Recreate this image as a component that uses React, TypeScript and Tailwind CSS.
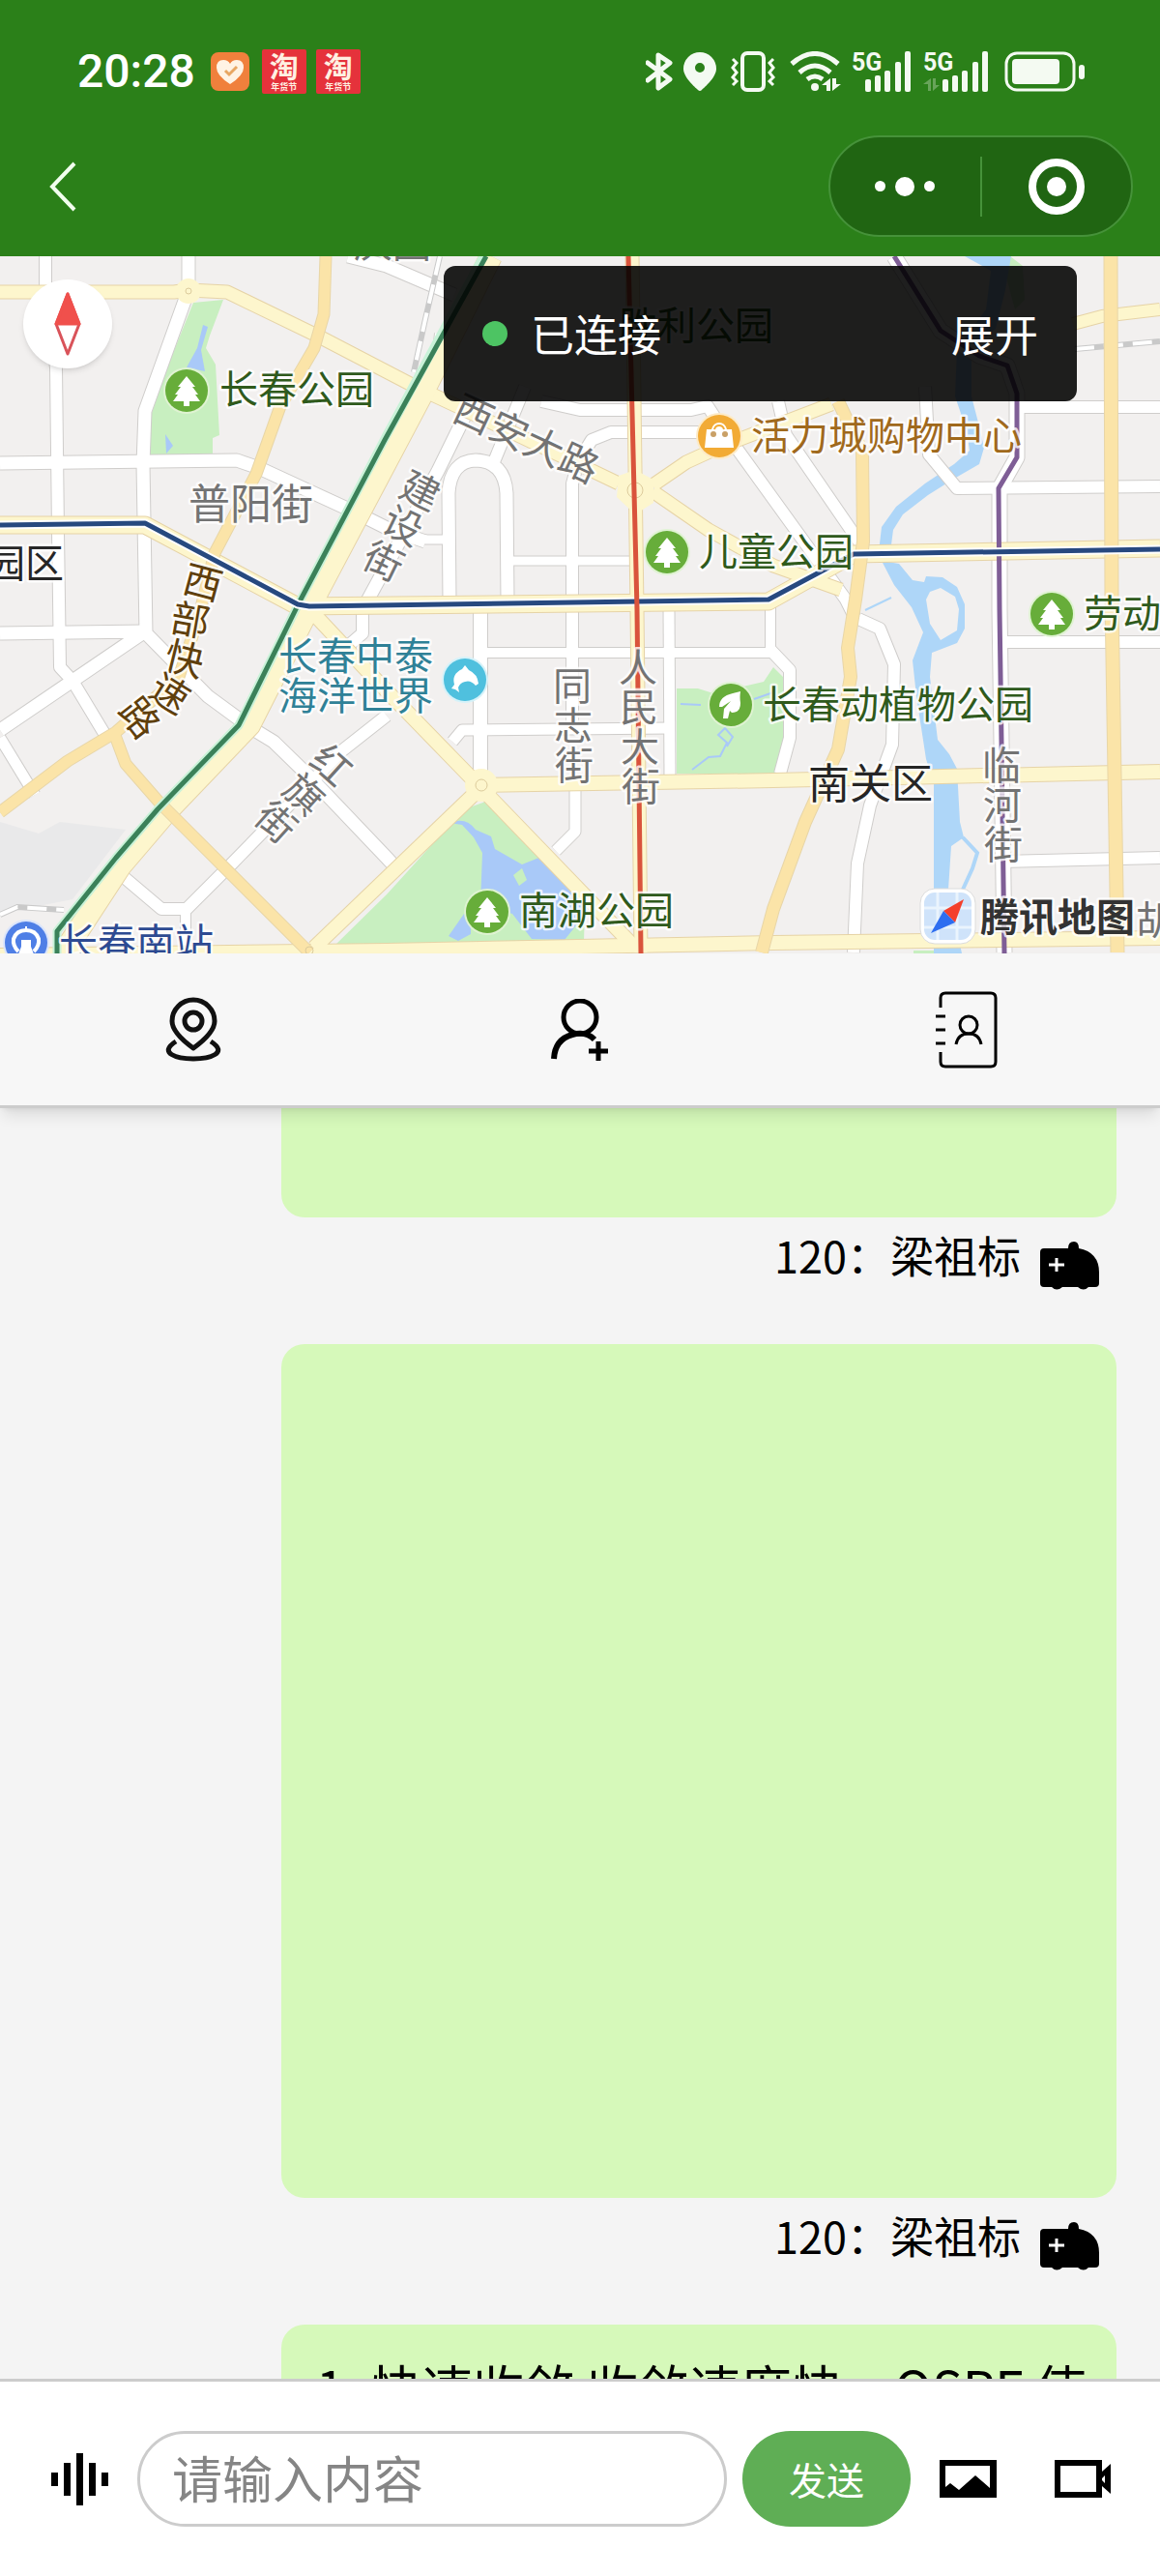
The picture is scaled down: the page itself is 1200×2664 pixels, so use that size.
type Road = { d: string; w: number };

const whiteRoads: Road[] = [
  { d: "M47 265V300L58 380L60 550L62 690L75 704L110 762", w: 12 },
  { d: "M195 265V300L150 425L148 480L151 655L215 720L260 753L283 767L320 803L400 887L412 900", w: 13 },
  { d: "M0 479L245 476L268 484L368 530L402 547L440 560", w: 13 },
  { d: "M0 655L150 653L75 704L0 755", w: 13 },
  { d: "M0 763L36 822", w: 11 },
  { d: "M400 740L353 777L240 893L193 940H167L128 907", w: 12 },
  { d: "M192 940V980", w: 10 },
  { d: "M360 265L400 275L470 305", w: 13 },
  { d: "M456 345L452 380L440 410", w: 12 },
  { d: "M480 432L453 487L378 625", w: 13 },
  { d: "M375 628V655L360 668", w: 12 },
  { d: "M465 622L464 510Q466 477 492 476Q522 477 524 510L525 622", w: 13 },
  { d: "M430 558H462", w: 9 },
  { d: "M543 400L510 480", w: 12 },
  { d: "M592 622V500L598 478L612 455L632 447H730", w: 12 },
  { d: "M525 580H655", w: 9 },
  { d: "M560 415L600 424H715L732 420L745 440L875 620L885 640", w: 12 },
  { d: "M805 415L813 450L890 562", w: 12 },
  { d: "M497 628V800", w: 14 },
  { d: "M592 628V755", w: 12 },
  { d: "M692 628L693 805", w: 11 },
  { d: "M500 675H797V628", w: 10 },
  { d: "M468 767L478 755L693 753", w: 11 },
  { d: "M595 812V860L575 880", w: 11 },
  { d: "M797 672L817 693V763L807 800", w: 12 },
  { d: "M888 640L910 650L925 687L923 770L900 833L887 893L883 985", w: 12 },
  { d: "M957 400L961 470L990 505L1200 503", w: 12 },
  { d: "M1052 421H1200", w: 12 },
  { d: "M1036 664H1200", w: 12 },
  { d: "M1036 891L1200 887", w: 12 },
  { d: "M925 265L973 342L1013 368L1042 378L1052 407V473L1034 505L1034 630L1036 767L1039 985", w: 15 },
];

const yellowRoads: Road[] = [
  { d: "M0 302H180L195 300L235 302L330 348L430 400L475 421L640 500", w: 13 },
  { d: "M675 502L710 478L745 462L860 418", w: 13 },
  { d: "M675 508L733 548L800 585L870 610", w: 13 },
  { d: "M0 543H150L308 627L795 622L883 573L1200 567", w: 17 },
  { d: "M508 265L438 405L320 628L258 750L172 840L125 895L66 985", w: 22 },
  { d: "M322 632L383 697L490 807L655 978", w: 14 },
  { d: "M500 812L325 980", w: 14 },
  { d: "M500 812L800 807L1200 798", w: 14 },
  { d: "M0 988L400 983L800 975L1200 970", w: 14 },
  { d: "M654 265L659 630L663 985", w: 13 },
  { d: "M1110 335L1140 327L1200 320", w: 12 },
];

const orangeRoads: Road[] = [
  { d: "M337 265L335 325L325 360L290 420L265 490L222 572L205 640L185 700L120 757L70 787L0 840", w: 11 },
  { d: "M118 758L130 790L165 830L320 985", w: 11 },
  { d: "M867 415L892 467L893 560L885 620L877 670L880 700L867 775L833 850L800 940L788 985", w: 12 },
  { d: "M1149 265L1150 620L1153 800L1156 985", w: 13 },
];

const railways = "M455 265L440 330L428 385M1112 361L1200 353M0 946L18 938L66 941";

const green = "#2f5a1c";
const gray = "#737373";

type Label = { text: string; x: number; y: number; fill: string; size?: number; bold?: boolean; angle?: number };

const labels: Label[] = [
  { text: "庆园", x: 366, y: 266, fill: gray },
  { text: "胜利公园", x: 640, y: 351, fill: green },
  { text: "长春公园", x: 227, y: 417, fill: green },
  { text: "普阳街", x: 195, y: 537, fill: gray, size: 43 },
  { text: "园区", x: -14, y: 597, fill: "#262626", size: 40 },
  { text: "西安大路", x: 466, y: 433, fill: gray, angle: 25 },
  { text: "活力城购物中心", x: 777, y: 465, fill: "#a0691c" },
  { text: "儿童公园", x: 723, y: 585, fill: green },
  { text: "劳动", x: 1121, y: 649, fill: green },
  { text: "长春中泰", x: 288, y: 693, fill: "#2f8197" },
  { text: "海洋世界", x: 288, y: 734, fill: "#2f8197" },
  { text: "长春动植物公园", x: 789, y: 743, fill: green },
  { text: "南关区", x: 836, y: 826, fill: "#262626", size: 43 },
  { text: "南湖公园", x: 537, y: 956, fill: green },
  { text: "长春南站", x: 61, y: 989, fill: "#2d4a92" },
  { text: "胡", x: 1175, y: 966, fill: gray },
  { text: "腾讯地图", x: 1014, y: 963, fill: "#333333", bold: true },
];

// street names that follow the road, one glyph per point
const streetNames = [
  { fill: "#5f3f0c", glyphs: [["西", 210, 602, 15], ["部", 197, 641, 10], ["快", 191, 681, 14], ["速", 176, 717, 32], ["路", 145, 742, 52]] },
  { fill: gray, glyphs: [["建", 435, 507, 26], ["设", 417, 543, 26], ["街", 397, 580, 26]] },
  { fill: gray, glyphs: [["红", 343, 791, 42], ["旗", 315, 821, 42], ["街", 286, 850, 42]] },
  { fill: gray, glyphs: [["同", 592, 709, 0], ["志", 593, 750, 0], ["街", 594, 791, 0]] },
  { fill: gray, glyphs: [["人", 660, 690, 0], ["民", 661, 731, 0], ["大", 662, 772, 0], ["街", 663, 813, 0]] },
  { fill: gray, glyphs: [["临", 1036, 791, 0], ["河", 1037, 832, 0], ["街", 1038, 873, 0]] },
] as { fill: string; glyphs: [string, number, number, number][] }[];

const parks = [
  [193, 404],
  [690, 571],
  [1088, 635],
  [504, 943],
];

const Roads = ({ roads, fill, edge }: { roads: Road[]; fill: string; edge: string }) => {
  return (
    <g fill="none" strokeLinejoin="round">
      {roads.map((r) => (
        <path key={r.d} d={r.d} stroke={edge} strokeWidth={r.w + 2} />
      ))}
      {roads.map((r) => (
        <path key={r.d} d={r.d} stroke={fill} strokeWidth={r.w} />
      ))}
    </g>
  );
};

const CityMap = () => {
  return (
    <svg viewBox="0 265 1200 721" className="block h-auto w-full bg-[#f2f0ef]" role="img" aria-label="地图">
      <path d="M0 850L40 862L62 850L130 858L75 930L0 945Z" fill="#e9e9ea" />
      <g fill="#c8efc0">
        <path d="M200 313L231 310L217 347L213 360L223 377L227 450L220 453V470H155V433L173 380Z" />
        <path d="M700 712H722L738 717L790 705L800 690L815 705V760L805 800H700Z" />
        <path d="M480 837L505 828L515 830L560 880L605 935L604 975L345 979L400 925Z" />
        <path d="M1045 265L1058 275L1060 310L1050 320L1035 265Z" />
        <path d="M945 983H970V986H945Z" />
      </g>
      <g fill="#a9c9f8">
        <path d="M210 336L215 338L208 362L212 384L193 380L204 360Z" />
        <path d="M171 449L179 461L172 469Z" />
        <path d="M465 851Q482 844 492 858L508 865L512 878L540 894L560 886L600 930L608 942L584 972L550 971L530 945L497 935L499 882L490 866L478 853Z" />
        <path d="M480 945L464 968L474 973L487 966V945Z" />
      </g>
      <path d="M531 905L540 898L545 910L537 916Z" fill="#c8efc0" />
      <path
        d="M704 728L725 729M780 723L800 716M716 796L733 783L745 782L752 768L743 760L750 753L758 762L752 772"
        fill="none"
        stroke="#a9c9f8"
        strokeWidth="2"
      />
      <g fill="#aed6f8">
        <path d="M998 265H1046L1040 300L1030 340L1005 360L1005 410L1012 437L1018 463L1013 480L987 495L960 512L934 532L924 548L921 571H909L912 545L927 524L957 500L987 480L1003 466L1000 445L988 410L990 360L1020 320L1025 280Z" />
        <path
          fillRule="evenodd"
          d="M912 580L930 583L944 600L956 602L958 596L975 597L990 607L998 625V650L990 665L964 675L962 700L970 765L982 780L990 795L993 850L997 866L984 875L981 920L995 986H966V810L958 785L948 720L944 683L955 654L943 628L925 605ZM958 620L962 612L973 608L988 617L992 630L990 652L973 662L962 645Z"
        />
      </g>
      <path d="M996 866L1011 882L1006 898L995 922" fill="none" stroke="#aed6f8" strokeWidth="4" />
      <path d="M895 631L922 618" stroke="#aed6f8" strokeWidth="2" />

      <Roads roads={whiteRoads} fill="#ffffff" edge="#cfcdcb" />
      <path d={railways} fill="none" stroke="#c9c9c9" strokeWidth="6" />
      <path d={railways} fill="none" stroke="#ffffff" strokeWidth="4" strokeDasharray="20 10" />
      <Roads roads={yellowRoads} fill="#fdf6cd" edge="#e6d3a6" />
      <Roads roads={orangeRoads} fill="#fbe4a8" edge="#e8d6a8" />
      <g fill="#fdf6cd">
        <circle cx="195" cy="301" r="13" />
        <circle cx="498" cy="812" r="17" />
        <path d="M640 492L657 486L676 496V520L657 532L638 514Z" />
      </g>
      <g fill="none" stroke="#dccb9c" strokeWidth="1">
        <circle cx="195" cy="301" r="3" />
        <circle cx="498" cy="812" r="6" />
        <circle cx="657" cy="507" r="8" />
        <circle cx="320" cy="983" r="4" />
      </g>

      <g fill="none" strokeWidth="5" strokeLinejoin="round">
        <path d="M500 265L400 450L310 622L247 750L163 837L120 887L59 963L59 986" stroke="#c9f2d8" strokeWidth="9" />
        <path d="M503 265L398 455L310 622L247 750L163 837L120 887L59 963L59 986" stroke="#3b8159" />
        <path d="M925 265L973 342L1013 368L1042 378L1052 407V473L1033 505L1034 630L1036 767L1039 986" stroke="#7f5e96" />
        <path d="M0 543L150 541L308 625L320 627L795 620L883 573L1200 568" stroke="#ffffff" strokeWidth="9" />
        <path d="M0 543L150 541L308 625L320 627L795 620L883 573L1200 568" stroke="#27497f" />
        <path d="M650 265L659 630L663 986" stroke="#d9533c" />
      </g>

      <g fontFamily='"Noto Sans CJK SC", sans-serif' stroke="#ffffff" strokeOpacity="0.8" strokeWidth="5" strokeLinejoin="round" paintOrder="stroke">
        {labels.map((l) => (
          <text
            key={l.text}
            x={l.x}
            y={l.y}
            fill={l.fill}
            fontSize={l.size ?? 40}
            fontWeight={l.bold ? 700 : 400}
            transform={l.angle ? `rotate(${l.angle} ${l.x} ${l.y})` : undefined}
          >
            {l.text}
          </text>
        ))}
        {streetNames.map((s) =>
          s.glyphs.map(([ch, x, y, angle]) => (
            <text key={`${ch}${x}`} x={x} y={y + 15} fill={s.fill} fontSize="40" textAnchor="middle" transform={`rotate(${angle} ${x} ${y})`}>
              {ch}
            </text>
          )),
        )}
      </g>

      {parks.map(([x, y]) => (
        <g key={x} transform={`translate(${x} ${y})`}>
          <circle r="24" fill="#dff3d2" />
          <circle r="22" fill="#67ad3a" />
          <path d="M0 -15L9 -4H6L12 4H9L14 11H3V16H-3V11H-14L-9 4H-12L-6 -4H-9Z" fill="#fff" />
        </g>
      ))}
      <g transform="translate(756 729)">
        <circle r="24" fill="#dff3d2" />
        <circle r="22" fill="#67ad3a" />
        <path d="M-12 2Q-12 -9 2 -12L10 -14Q9 -8 10 -2Q10 8 1 8L-1 6L-3 14H-8L-7 4L0 -4L-9 2Z" fill="#fff" />
      </g>
      <g transform="translate(744 451)">
        <circle r="24" fill="#fdebc8" />
        <circle r="22" fill="#f2ab35" />
        <path d="M-13 -7H-8Q-6 -14 0 -14Q6 -14 8 -7H13L15 12H-15Z" fill="#fff" />
        <path d="M-5 -7Q-4 -11 0 -11Q4 -11 5 -7" fill="none" stroke="#f2ab35" strokeWidth="2" />
        <circle cx="-6" cy="-2" r="3" fill="#c9a066" />
        <circle cx="6" cy="-2" r="3" fill="#c9a066" />
      </g>
      <g transform="translate(481 703)">
        <circle r="24" fill="#d6f2f9" />
        <circle r="22" fill="#4fc0de" />
        <path d="M-3 -11L0 -15L4 -10Q13 -6 14 4L11 6Q6 0 0 2Q-5 3 -7 8L-6 13L-10 10L-14 9L-11 5Q-14 -6 -3 -11Z" fill="#fff" />
      </g>
      <g transform="translate(27 975)">
        <circle r="24" fill="#dbe5fb" />
        <circle r="22" fill="#4f7fe6" />
        <path d="M-8 9Q-14 3 -13 -4Q-10 -13 0 -13Q10 -13 13 -4Q14 3 8 9" fill="none" stroke="#fff" strokeWidth="4" />
        <path d="M0 -17V-12M-7 12L-4 4V-2H4V4L7 12Z" fill="#fff" stroke="#fff" strokeWidth="2" />
      </g>

      {/* map provider badge */}
      <g transform="translate(952 919)">
        <rect width="57" height="57" rx="15" fill="#fff" stroke="#dcdcdc" />
        <rect x="4" y="4" width="49" height="49" rx="11" fill="#cfe3fa" />
        <path d="M4 20H53M4 40H53M18 4V53M38 4V53" stroke="#eaf4fd" strokeWidth="3" />
        <path d="M45 11L36 35L24 23Z" fill="#f4402c" />
        <path d="M11 46L24 23L36 35Z" fill="#2e6ef0" />
      </g>
    </svg>
  );
};

const Signal = ({ dim }: { dim?: boolean }) => {
  return (
    <svg width={dim ? 68 : 62} height="42" viewBox={dim ? "-6 0 68 42" : "0 0 62 42"} fill="#f4faf2" aria-hidden="true">
      <text x={dim ? -6 : 0} y="20" fontFamily="Roboto, sans-serif" fontSize="25" fontWeight="700">
        5G
      </text>
      {dim && <path d="M2 28V41H-1V34H-6ZM4 28H7V35H11L4 41Z" opacity="0.3" />}
      <rect x="14" y="29" width="6" height="13" rx="2" />
      <rect x="24" y="25" width="6" height="17" rx="2" />
      <rect x="34" y="20" width="6" height="22" rx="2" />
      <rect x="45" y="11" width="6" height="31" rx="2" />
      <rect x="55" y="0" width="6" height="42" rx="2" />
    </svg>
  );
};

const TaobaoIcon = () => {
  return (
    <span className="flex h-[46px] w-[46px] flex-col items-center justify-between rounded-xs bg-[#e5323b] text-[#fff0e2]">
      <span className="text-[30px] leading-[32px] font-bold">淘</span>
      <span className="text-[9px] leading-[14px] font-bold">年货节</span>
    </span>
  );
};

const StatusBar = () => {
  return (
    <div className="flex h-[120px] items-center justify-between pt-[28px] pr-[77px] pl-[80px]">
      <div className="flex items-center">
        <span className="mr-4 font-[Roboto] text-[48px] leading-none font-medium">20:28</span>
        <svg width="40" height="40" viewBox="0 0 40 40" className="mr-[13px]" aria-hidden="true">
          <rect width="40" height="40" rx="8" fill="#f0803c" />
          <path d="M20 33Q6 24 6 16Q6 8 13 8Q18 8 20 12Q22 8 27 8Q34 8 34 16Q34 24 20 33Z" fill="#fff3e4" />
          <path d="M15 19L19 23L27 15" fill="none" stroke="#e8a763" strokeWidth="3" />
        </svg>
        <div className="flex gap-[10px]">
          <TaobaoIcon />
          <TaobaoIcon />
        </div>
      </div>
      <div className="flex items-center">
        <svg width="28" height="42" viewBox="0 0 28 42" className="mr-[11px]" fill="none" stroke="#f4faf2" strokeWidth="5" strokeLinecap="round" strokeLinejoin="round" aria-hidden="true">
          <path d="M2 12L25 29L13 38V4L25 12L2 30" />
        </svg>
        <svg width="34" height="40" viewBox="0 0 34 40" className="mr-[14px]" aria-hidden="true">
          <path fillRule="evenodd" fill="#f4faf2" d="M17 0A17 17 0 0 1 34 17C34 26 22 36 19 39Q17 41 15 39C12 36 0 26 0 17A17 17 0 0 1 17 0ZM17 11A5 5 0 1 0 17 21A5 5 0 1 0 17 11Z" />
        </svg>
        <svg width="48" height="42" viewBox="0 0 48 42" className="mr-[14px]" fill="none" stroke="#f4faf2" aria-hidden="true">
          <rect x="13" y="2" width="22" height="38" rx="5" strokeWidth="4" />
          <path d="M3 8L7 12L3 17L7 22L3 27L7 31L3 35M45 8L41 12L45 17L41 22L45 27L41 31L45 35" strokeWidth="3" />
        </svg>
        <svg width="54" height="42" viewBox="0 0 54 42" className="mr-[10px]" fill="none" stroke="#f4faf2" aria-hidden="true">
          <path d="M2 13Q26 -8 50 13M10 22Q26 8 42 22M18 29Q26 23 34 29" strokeWidth="5" />
          <circle cx="26" cy="37" r="4" fill="#f4faf2" stroke="none" />
          <path d="M42 28V41H38V35H33ZM44 28H48V34H53L44 41Z" fill="#f4faf2" stroke="none" />
        </svg>
        <div className="mr-4 flex gap-[12px]">
          <Signal />
          <Signal dim />
        </div>
        <svg width="84" height="42" viewBox="0 0 84 42" aria-hidden="true">
          <rect x="2" y="2" width="70" height="38" rx="11" fill="none" stroke="#f4faf2" strokeWidth="3" />
          <rect x="8" y="8" width="49" height="26" rx="4" fill="#f4faf2" />
          <rect x="77" y="14" width="6" height="15" rx="3" fill="#f4faf2" />
        </svg>
      </div>
    </div>
  );
};

const Header = () => {
  return (
    <header className="shrink-0 bg-[#2b8019] text-white">
      <StatusBar />
      <div className="flex h-[145px] items-center justify-between pr-[28px] pl-[50px]">
        <button type="button" aria-label="返回">
          <svg width="29" height="52" viewBox="0 0 29 52" fill="none" stroke="#f1ffee" strokeWidth="4">
            <path d="M27 2L4 26L27 50" />
          </svg>
        </button>
        <div className="flex h-[105px] w-[315px] items-center rounded-full border-2 border-[#46923a] bg-[#206512]">
          <button type="button" aria-label="更多" className="flex flex-1 items-center justify-center gap-[10px]">
            <span className="h-[11px] w-[11px] rounded-full bg-white" />
            <span className="h-5 w-5 rounded-full bg-white" />
            <span className="h-[11px] w-[11px] rounded-full bg-white" />
          </button>
          <span className="h-[62px] w-[2px] bg-[#46923a]" />
          <button type="button" aria-label="关闭" className="flex flex-1 items-center justify-center">
            <span className="flex h-[58px] w-[58px] items-center justify-center rounded-full border-8 border-white">
              <span className="h-5 w-5 rounded-full bg-white" />
            </span>
          </button>
        </div>
      </div>
    </header>
  );
};

const MapSection = () => {
  return (
    <section className="relative shrink-0 overflow-hidden">
      <CityMap />
      <button type="button" aria-label="指南针" className="absolute top-[24px] left-[24px] flex h-[92px] w-[92px] items-center justify-center rounded-full bg-white shadow-md">
        <svg width="28" height="66" viewBox="0 0 28 66" strokeLinejoin="round">
          <path d="M14 2L26 33L14 64L2 33Z" fill="#fff" stroke="#d9535a" strokeWidth="3" />
          <path d="M14 2L26 33H2Z" fill="#f0504c" stroke="#f0504c" strokeWidth="3" />
        </svg>
      </button>
      <div className="absolute top-[10px] right-[86px] flex h-[140px] w-[655px] items-center justify-between rounded-xl bg-black/88 px-10 text-[45px] text-white">
        <div className="flex items-center gap-6">
          <span className="h-[26px] w-[26px] rounded-full bg-[#4dc463]" />
          <span>已连接</span>
        </div>
        <button type="button">展开</button>
      </div>
    </section>
  );
};

const Toolbar = () => {
  return (
    <nav className="relative z-10 grid h-[160px] shrink-0 grid-cols-3 place-items-center border-b-3 border-[#cccccc] bg-[#f7f7f7] shadow-lg">
      <button type="button" aria-label="位置">
        <svg width="58" height="68" viewBox="0 0 58 68" fill="none" stroke="#111" strokeWidth="5">
          <path d="M29 53Q7 37 7 25A22 22 0 0 1 51 25Q51 37 29 53Z" strokeLinejoin="round" />
          <circle cx="29" cy="25" r="9" />
          <path d="M11 46C-8 58 12 64 29 64C46 64 66 58 47 46" />
        </svg>
      </button>
      <button type="button" aria-label="添加联系人">
        <svg width="60" height="64" viewBox="0 0 60 64" fill="none" stroke="#000" strokeWidth="5">
          <ellipse cx="30" cy="19" rx="17" ry="17" />
          <path d="M3 62Q4 42 22 37Q36 33 45 42" strokeWidth="6" />
          <path d="M39 54H59M49 44V64" />
        </svg>
      </button>
      <button type="button" aria-label="通讯录">
        <svg width="64" height="80" viewBox="0 0 64 80" fill="none" stroke="#000" strokeWidth="3">
          <path d="M5 17V7Q5 2 10 2H57Q62 2 62 7V73Q62 78 57 78H10Q5 78 5 73V63" />
          <path d="M0 26H10M0 40H10M0 54H10" />
          <circle cx="34" cy="35" r="9" />
          <path d="M21 55Q23 44 34 44Q45 44 47 55" />
        </svg>
      </button>
    </nav>
  );
};

const Sender = ({ name }: { name: string }) => {
  return (
    <div className="flex h-[131px] items-start justify-end gap-5 pt-[15px] pr-[17px]">
      <span className="text-[45px] leading-[48px]">{name}</span>
      <svg width="62" height="50" viewBox="0 0 62 50" className="mt-[10px]" aria-hidden="true">
        <path d="M4 7H29Q29 0 35 0Q40 0 40 7Q61 11 61 32V43Q61 47 57 47H50Q45 52 39 47H23Q17 52 12 47H4Q0 47 0 43V11Q0 7 4 7Z" />
        <path d="M17 17V31M9 24H25" stroke="#fff" strokeWidth="3" />
      </svg>
    </div>
  );
};

const Messages = () => {
  return (
    <main className="min-h-0 flex-1 overflow-hidden bg-[#f4f4f4] pr-[45px] pl-[291px] text-black">
      <div className="h-[113px] rounded-b-3xl bg-[#d6f9ba]" />
      <Sender name="120：梁祖标" />
      <div className="h-[883px] rounded-3xl bg-[#d6f9ba]" />
      <Sender name="120：梁祖标" />
      <div className="rounded-3xl bg-[#d6f9ba] px-9 pt-[26px] pb-9 text-[53px] leading-[76px] whitespace-nowrap">
        1. 快速收敛 收敛速度快，OSPF 使
      </div>
    </main>
  );
};

const Composer = () => {
  return (
    <form className="flex h-[204px] shrink-0 items-center border-t-3 border-[#cccccc] bg-white pr-[51px] pl-[53px]">
      <button type="button" aria-label="语音" className="mr-[30px]">
        <svg width="59" height="54" viewBox="0 0 59 54">
          <path d="M0 20H7V34H0ZM13 10H20V44H13ZM26 0H33V54H26ZM39 10H46V44H39ZM52 20H59V34H52Z" />
        </svg>
      </button>
      <input
        type="text"
        aria-label="请输入内容"
        placeholder="请输入内容"
        className="mr-4 h-[99px] min-w-0 flex-1 rounded-full border-3 border-[#cccccc] px-[33px] pb-1 text-[52px] placeholder:text-[#858585]"
      />
      <button type="button" className="mr-[30px] h-[99px] w-[174px] rounded-full bg-[#5fae55] text-[39px] text-white">
        发送
      </button>
      <button type="button" aria-label="图片" className="mr-[60px]">
        <svg width="59" height="39" viewBox="0 0 59 39">
          <path fillRule="evenodd" d="M0 0H59V39H0ZM6 6V28L11 24L20 31L37 16L52 29V6Z" />
        </svg>
      </button>
      <button type="button" aria-label="视频">
        <svg width="58" height="39" viewBox="0 0 58 39">
          <path fillRule="evenodd" d="M0 0H49V12L58 4V35L49 27V39H0ZM6 6V33H43V6ZM52 16L49 19V21L52 24Z" />
        </svg>
      </button>
    </form>
  );
};

export default function App() {
  return (
    <div className="flex h-screen flex-col font-['Noto_Sans_CJK_SC',sans-serif]">
      <Header />
      <MapSection />
      <Toolbar />
      <Messages />
      <Composer />
    </div>
  );
}
